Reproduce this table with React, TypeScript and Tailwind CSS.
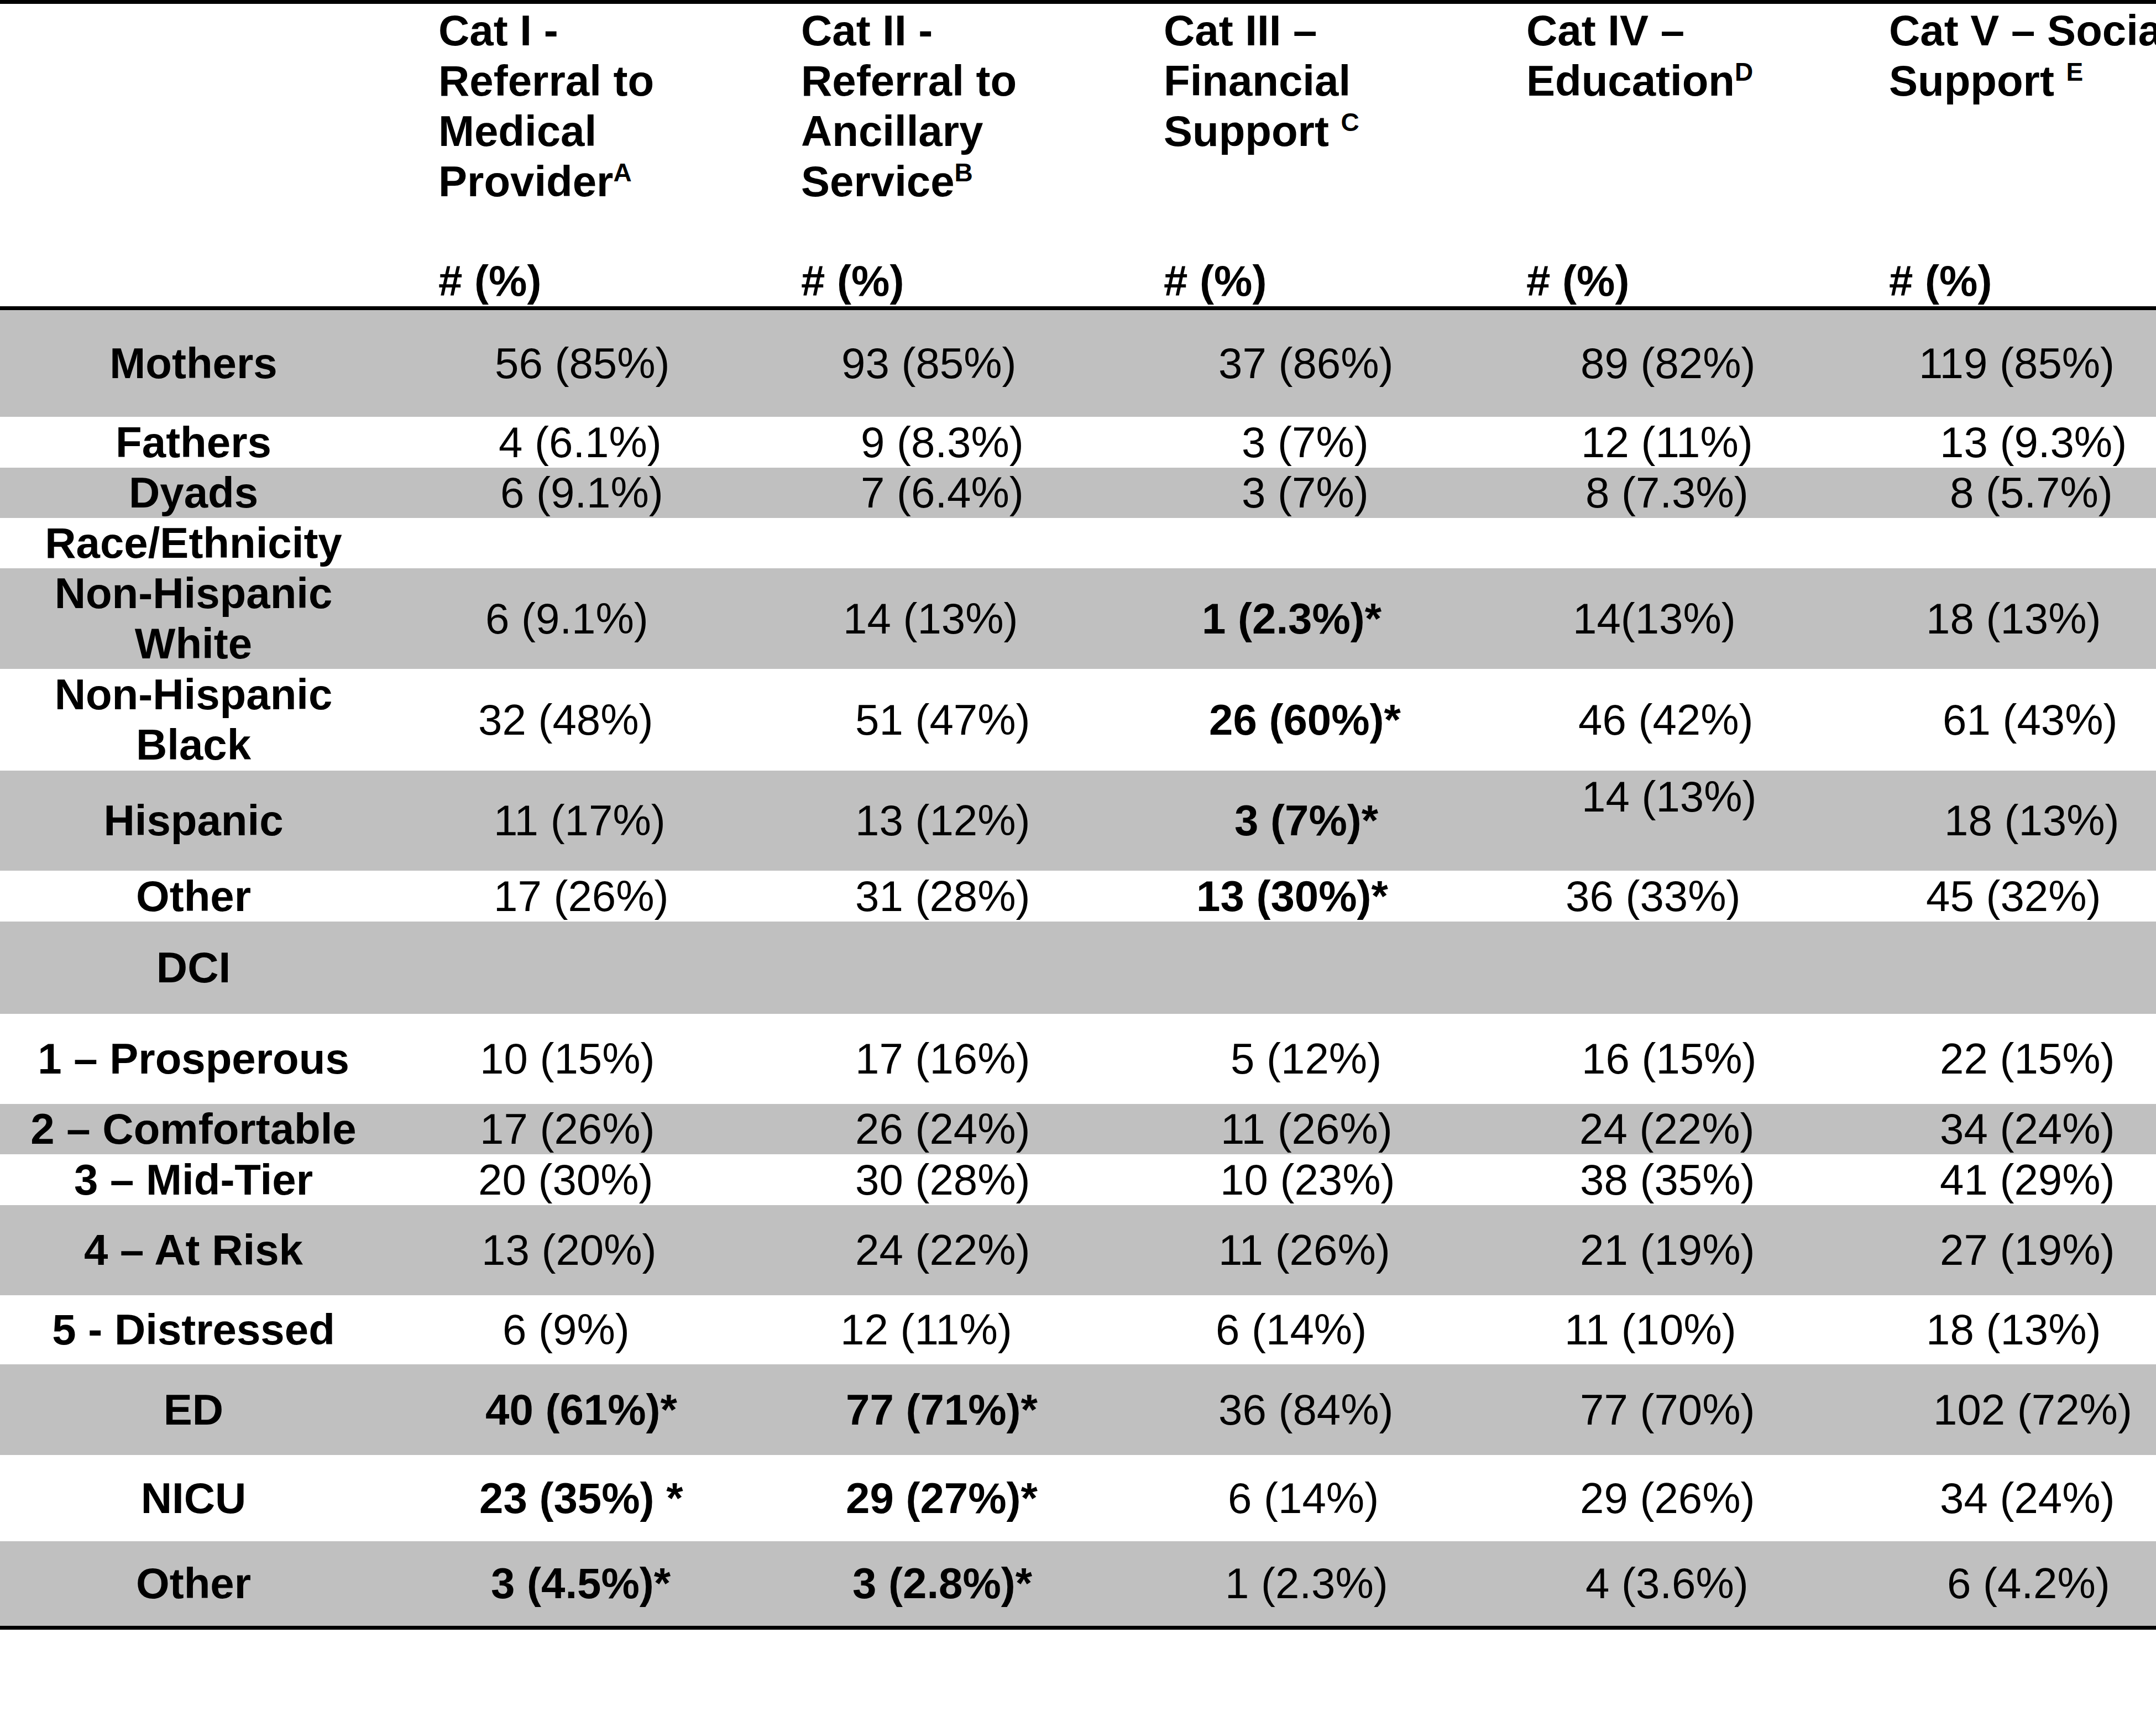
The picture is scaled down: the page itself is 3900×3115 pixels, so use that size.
type Cell = { t: string; pl: string; b?: boolean; top?: boolean };
type Row = { label: string[]; h: string; gray: boolean; cells: Cell[] };

const headers: { lines: string[]; sup?: string; supGap?: boolean }[] = [
  { lines: ["Cat I -", "Referral to", "Medical", "Provider"], sup: "A" },
  { lines: ["Cat II -", "Referral to", "Ancillary", "Service"], sup: "B" },
  { lines: ["Cat III –", "Financial", "Support"], sup: "C", supGap: true },
  { lines: ["Cat IV –", "Education"], sup: "D" },
  { lines: ["Cat V – Social", "Support"], sup: "E", supGap: true },
];

const rows: Row[] = [
  {
    label: ["Mothers"], h: "h-[193px]", gray: true,
    cells: [
      { t: "56 (85%)", pl: "pl-[195px]" },
      { t: "93 (85%)", pl: "pl-[166px]" },
      { t: "37 (86%)", pl: "pl-[192px]" },
      { t: "89 (82%)", pl: "pl-[191px]" },
      { t: "119 (85%)", pl: "pl-[147px]" },
    ],
  },
  {
    label: ["Fathers"], h: "h-[92px]", gray: false,
    cells: [
      { t: "4 (6.1%)", pl: "pl-[202px]" },
      { t: "9 (8.3%)", pl: "pl-[201px]" },
      { t: "3 (7%)", pl: "pl-[234px]" },
      { t: "12 (11%)", pl: "pl-[192px]" },
      { t: "13 (9.3%)", pl: "pl-[185px]" },
    ],
  },
  {
    label: ["Dyads"], h: "h-[91px]", gray: true,
    cells: [
      { t: "6 (9.1%)", pl: "pl-[205px]" },
      { t: "7 (6.4%)", pl: "pl-[201px]" },
      { t: "3 (7%)", pl: "pl-[234px]" },
      { t: "8 (7.3%)", pl: "pl-[200px]" },
      { t: "8 (5.7%)", pl: "pl-[203px]" },
    ],
  },
  { label: ["Race/Ethnicity"], h: "h-[91px]", gray: false, cells: [] },
  {
    label: ["Non-Hispanic", "White"], h: "h-[182px]", gray: true,
    cells: [
      { t: "6 (9.1%)", pl: "pl-[178px]" },
      { t: "14 (13%)", pl: "pl-[169px]" },
      { t: "1 (2.3%)*", pl: "pl-[162px]", b: true },
      { t: "14(13%)", pl: "pl-[177px]" },
      { t: "18 (13%)", pl: "pl-[160px]" },
    ],
  },
  {
    label: ["Non-Hispanic", "Black"], h: "h-[184px]", gray: false,
    cells: [
      { t: "32 (48%)", pl: "pl-[165px]" },
      { t: "51 (47%)", pl: "pl-[191px]" },
      { t: "26 (60%)*", pl: "pl-[175px]", b: true },
      { t: "46 (42%)", pl: "pl-[187px]" },
      { t: "61 (43%)", pl: "pl-[190px]" },
    ],
  },
  {
    label: ["Hispanic"], h: "h-[181px]", gray: true,
    cells: [
      { t: "11 (17%)", pl: "pl-[193px]" },
      { t: "13 (12%)", pl: "pl-[191px]" },
      { t: "3 (7%)*", pl: "pl-[221px]", b: true },
      { t: "14 (13%)", pl: "pl-[193px]", top: true },
      { t: "18 (13%)", pl: "pl-[193px]" },
    ],
  },
  {
    label: ["Other"], h: "h-[92px]", gray: false,
    cells: [
      { t: "17 (26%)", pl: "pl-[193px]" },
      { t: "31 (28%)", pl: "pl-[191px]" },
      { t: "13 (30%)*", pl: "pl-[152px]", b: true },
      { t: "36 (33%)", pl: "pl-[164px]" },
      { t: "45 (32%)", pl: "pl-[160px]" },
    ],
  },
  { label: ["DCI"], h: "h-[167px]", gray: true, cells: [] },
  {
    label: ["1 – Prosperous"], h: "h-[163px]", gray: false,
    cells: [
      { t: "10 (15%)", pl: "pl-[168px]" },
      { t: "17 (16%)", pl: "pl-[191px]" },
      { t: "5 (12%)", pl: "pl-[214px]" },
      { t: "16 (15%)", pl: "pl-[193px]" },
      { t: "22 (15%)", pl: "pl-[185px]" },
    ],
  },
  {
    label: ["2 – Comfortable"], h: "h-[91px]", gray: true,
    cells: [
      { t: "17 (26%)", pl: "pl-[168px]" },
      { t: "26 (24%)", pl: "pl-[191px]" },
      { t: "11 (26%)", pl: "pl-[196px]" },
      { t: "24 (22%)", pl: "pl-[189px]" },
      { t: "34 (24%)", pl: "pl-[185px]" },
    ],
  },
  {
    label: ["3 – Mid-Tier"], h: "h-[92px]", gray: false,
    cells: [
      { t: "20 (30%)", pl: "pl-[165px]" },
      { t: "30 (28%)", pl: "pl-[191px]" },
      { t: "10 (23%)", pl: "pl-[195px]" },
      { t: "38 (35%)", pl: "pl-[190px]" },
      { t: "41 (29%)", pl: "pl-[185px]" },
    ],
  },
  {
    label: ["4 – At Risk"], h: "h-[163px]", gray: true,
    cells: [
      { t: "13 (20%)", pl: "pl-[171px]" },
      { t: "24 (22%)", pl: "pl-[191px]" },
      { t: "11 (26%)", pl: "pl-[192px]" },
      { t: "21 (19%)", pl: "pl-[190px]" },
      { t: "27 (19%)", pl: "pl-[185px]" },
    ],
  },
  {
    label: ["5 - Distressed"], h: "h-[125px]", gray: false,
    cells: [
      { t: "6 (9%)", pl: "pl-[209px]" },
      { t: "12 (11%)", pl: "pl-[164px]" },
      { t: "6 (14%)", pl: "pl-[187px]" },
      { t: "11 (10%)", pl: "pl-[162px]" },
      { t: "18 (13%)", pl: "pl-[160px]" },
    ],
  },
  {
    label: ["ED"], h: "h-[164px]", gray: true,
    cells: [
      { t: "40 (61%)*", pl: "pl-[178px]", b: true },
      { t: "77 (71%)*", pl: "pl-[174px]", b: true },
      { t: "36 (84%)", pl: "pl-[192px]" },
      { t: "77 (70%)", pl: "pl-[190px]" },
      { t: "102 (72%)", pl: "pl-[173px]" },
    ],
  },
  {
    label: ["NICU"], h: "h-[156px]", gray: false,
    cells: [
      { t: "23 (35%) *", pl: "pl-[167px]", b: true },
      { t: "29 (27%)*", pl: "pl-[174px]", b: true },
      { t: "6 (14%)", pl: "pl-[209px]" },
      { t: "29 (26%)", pl: "pl-[190px]" },
      { t: "34 (24%)", pl: "pl-[185px]" },
    ],
  },
  {
    label: ["Other"], h: "h-[153px]", gray: true,
    cells: [
      { t: "3 (4.5%)*", pl: "pl-[188px]", b: true },
      { t: "3 (2.8%)*", pl: "pl-[186px]", b: true },
      { t: "1 (2.3%)", pl: "pl-[204px]" },
      { t: "4 (3.6%)", pl: "pl-[200px]" },
      { t: "6 (4.2%)", pl: "pl-[198px]" },
    ],
  },
];

const grid = "grid grid-cols-[700px_656px_656px_656px_656px_656px]";

export default function App() {
  return (
    <div className="w-[3900px] h-[3115px] bg-white overflow-hidden text-black font-['Liberation_Sans',Arial,sans-serif] text-[78px] leading-[91px]">
      <div className="w-[3980px] border-t-[7px] border-b-[7px] border-black">
        {/* Header */}
        <div className={`${grid} h-[554px] border-b-[7px] border-black`}>
          <div />
          {headers.map((h, i) => (
            <div key={i} className="flex flex-col justify-between pt-[3px] pl-[93px] font-bold whitespace-nowrap">
              <div>
                {h.lines.map((l, j) => (
                  <div key={j}>
                    {l}
                    {j === h.lines.length - 1 && h.sup && (
                      <>
                        {h.supGap && " "}
                        <sup className="text-[46px] -top-[27px]">{h.sup}</sup>
                      </>
                    )}
                  </div>
                ))}
              </div>
              <div># (%)</div>
            </div>
          ))}
        </div>

        {/* Body */}
        {rows.map((r, i) => (
          <div key={i} className={`${grid} ${r.h} ${r.gray ? "bg-[#c0c0c0]" : "bg-white"}`}>
            <div className="flex flex-col justify-center items-center text-center font-bold whitespace-nowrap">
              {r.label.map((l, j) => (
                <div key={j}>{l}</div>
              ))}
            </div>
            {r.cells.map((c, j) => (
              <div
                key={j}
                className={`flex whitespace-nowrap ${c.pl} ${c.top ? "items-start pt-[2px]" : "items-center"} ${c.b ? "font-bold" : ""}`}
              >
                {c.t}
              </div>
            ))}
          </div>
        ))}
      </div>
    </div>
  );
}
